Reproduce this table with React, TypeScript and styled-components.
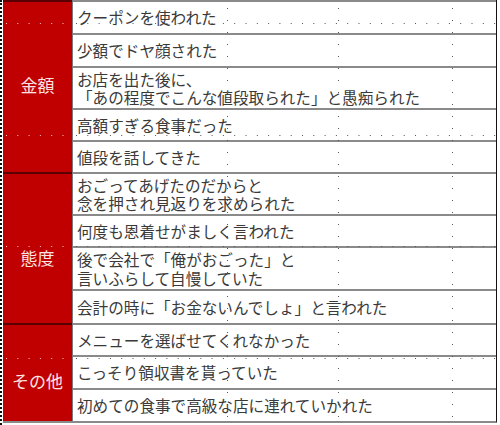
import React from "react";
import styled, { createGlobalStyle } from "styled-components";

const Global = createGlobalStyle`
  html, body { margin: 0; padding: 0; background: #fff; }
  body { font-family: "Noto Sans CJK JP", "Noto Sans", sans-serif; }
`;

const Page = styled.div`
  position: relative;
  width: 500px;
  height: 425px;
  display: flex;
  align-items: flex-start;
  background: #fff;
`;

const LeftEdge = styled.div`
  width: 1px;
  height: 425px;
  border-left: 2px dotted #111;
`;

const Sheet = styled.div`
  width: 493px;
  display: flex;
  flex-direction: column;
  border-right: 1px solid #111;
  border-bottom: 2px solid #8a8a8a;
`;

const Group = styled.div`
  display: grid;
  grid-template-columns: 69px 1fr;
`;

const Label = styled.div<{ $offset: number }>`
  background: #c00000;
  border-top: 2px solid #5a0000;
  color: #fbe4e4;
  font-size: 17px;
  line-height: 20px;
  text-align: center;
  padding-top: ${(p) => p.$offset}px;
  box-sizing: border-box;
`;

const Rows = styled.div`
  display: flex;
  flex-direction: column;
  border-left: 1px solid #7a7a7a;
`;

const Row = styled.div<{ $h: number }>`
  height: ${(p) => p.$h}px;
  box-sizing: border-box;
  border-top: 2px solid #8a8a8a;
  display: flex;
  flex-direction: column;
  justify-content: center;
  padding-left: 4px;
  color: #3a3a3a;
  font-size: 15.6px;
  line-height: 18.5px;
  white-space: nowrap;
`;

const Line = styled.span`
  display: block;
  height: 18.5px;
`;

const Grid = styled.svg`
  position: absolute;
  left: 0;
  top: 0;
  pointer-events: none;
`;

type Item = { lines: string[]; h: number };
type Cat = { name: string; offset: number; items: Item[] };

const data: Cat[] = [
  {
    name: "金額",
    offset: 73,
    items: [
      { lines: ["クーポンを使われた"], h: 33 },
      { lines: ["少額でドヤ顔された"], h: 33 },
      { lines: ["お店を出た後に、", "「あの程度でこんな値段取られた」と愚痴られた"], h: 42 },
      { lines: ["高額すぎる食事だった"], h: 32 },
      { lines: ["値段を話してきた"], h: 32 },
    ],
  },
  {
    name: "態度",
    offset: 74,
    items: [
      { lines: ["おごってあげたのだからと", "念を押され見返りを求められた"], h: 42 },
      { lines: ["何度も恩着せがましく言われた"], h: 32 },
      { lines: ["後で会社で「俺がおごった」と", "言いふらして自慢していた"], h: 43 },
      { lines: ["会計の時に「お金ないんでしょ」と言われた"], h: 34 },
    ],
  },
  {
    name: "その他",
    offset: 46,
    items: [
      { lines: ["メニューを選ばせてくれなかった"], h: 32 },
      { lines: ["こっそり領収書を貰っていた"], h: 33 },
      { lines: ["初めての食事で高級な店に連れていかれた"], h: 33 },
    ],
  },
];

const hLines = [23, 135, 246, 358];
const vLines = [227, 338, 452];

export default function App() {
  return (
    <Page>
      <Global />
      <LeftEdge />
      <Sheet>
        {data.map((c) => (
          <Group key={c.name}>
            <Label $offset={c.offset}>{c.name}</Label>
            <Rows>
              {c.items.map((it, i) => (
                <Row key={i} $h={it.h}>
                  {it.lines.map((l, j) => (
                    <Line key={j}>{l}</Line>
                  ))}
                </Row>
              ))}
            </Rows>
          </Group>
        ))}
      </Sheet>
      <Grid width="500" height="425">
        {hLines.map((y) => (
          <g key={y}>
            <line x1="6" y1={y + 0.5} x2="72" y2={y + 0.5} stroke="#f6c8c8" strokeWidth="1" strokeDasharray="1 10.3" />
            <line x1="76" y1={y + 0.5} x2="496" y2={y + 0.5} stroke="#555" strokeWidth="1" strokeDasharray="1 10.3" />
          </g>
        ))}
        {vLines.map((x) => (
          <line key={x} x1={x + 0.5} y1="8" x2={x + 0.5} y2="421" stroke="#555" strokeWidth="1" strokeDasharray="1 11" />
        ))}
      </Grid>
    </Page>
  );
}
